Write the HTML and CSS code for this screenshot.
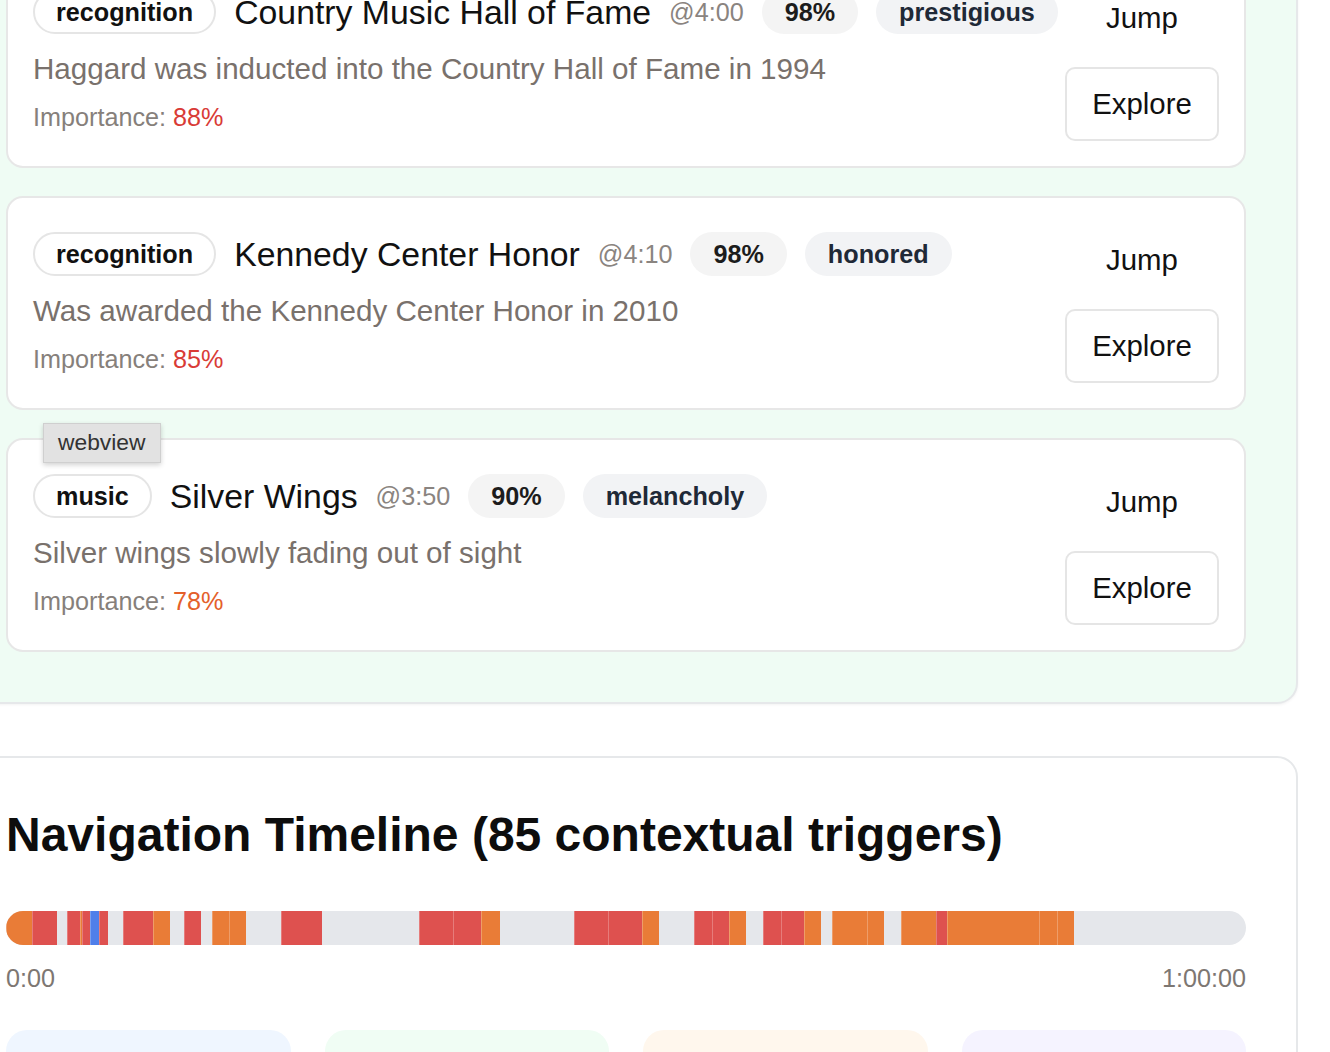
FILE: index.html
```html
<!DOCTYPE html>
<html lang="en">
<head>
<meta charset="utf-8">
<title>Contextual triggers</title>
<link rel="stylesheet" href="styles.css">
</head>
<body>
<div class="page">
  <section class="panel panel-green">
    <div class="card">
      <div class="card-main">
        <div class="row">
          <span class="pill pill-cat">recognition</span>
          <span class="title">Country Music Hall of Fame</span>
          <span class="ts">@4:00</span>
          <span class="pill pill-score">98%</span>
          <span class="pill pill-tone">prestigious</span>
        </div>
        <p class="desc">Haggard was inducted into the Country Hall of Fame in 1994</p>
        <p class="imp">Importance: <span class="imp-high">88%</span></p>
      </div>
      <div class="actions">
        <button class="btn btn-ghost">Jump</button>
        <button class="btn btn-outline">Explore</button>
      </div>
    </div>

    <div class="card">
      <div class="card-main">
        <div class="row">
          <span class="pill pill-cat">recognition</span>
          <span class="title">Kennedy Center Honor</span>
          <span class="ts">@4:10</span>
          <span class="pill pill-score">98%</span>
          <span class="pill pill-tone">honored</span>
        </div>
        <p class="desc">Was awarded the Kennedy Center Honor in 2010</p>
        <p class="imp">Importance: <span class="imp-high">85%</span></p>
      </div>
      <div class="actions">
        <button class="btn btn-ghost">Jump</button>
        <button class="btn btn-outline">Explore</button>
      </div>
    </div>

    <div class="card">
      <span class="tooltip">webview</span>
      <div class="card-main">
        <div class="row">
          <span class="pill pill-cat">music</span>
          <span class="title">Silver Wings</span>
          <span class="ts">@3:50</span>
          <span class="pill pill-score">90%</span>
          <span class="pill pill-tone">melancholy</span>
        </div>
        <p class="desc">Silver wings slowly fading out of sight</p>
        <p class="imp">Importance: <span class="imp-mid">78%</span></p>
      </div>
      <div class="actions">
        <button class="btn btn-ghost">Jump</button>
        <button class="btn btn-outline">Explore</button>
      </div>
    </div>
  </section>

  <section class="panel panel-white">
    <h2 class="heading">Navigation Timeline (85 contextual triggers)</h2>
    <div class="bar">
      <span class="seg seg-o" style="left:0%;width:2.097%"></span>
      <span class="seg seg-r" style="left:2.097%;width:2.016%"></span>
      <span class="seg seg-r" style="left:4.919%;width:1.048%"></span>
      <span class="seg seg-o" style="left:5.968%;width:0.161%"></span>
      <span class="seg seg-r" style="left:6.129%;width:0.645%"></span>
      <span class="seg seg-b" style="left:6.774%;width:0.726%"></span>
      <span class="seg seg-r" style="left:7.5%;width:0.726%"></span>
      <span class="seg seg-r" style="left:9.435%;width:2.419%"></span>
      <span class="seg seg-o" style="left:11.855%;width:1.371%"></span>
      <span class="seg seg-r" style="left:14.355%;width:1.371%"></span>
      <span class="seg seg-o" style="left:16.613%;width:1.371%"></span>
      <span class="seg seg-o" style="left:17.984%;width:1.371%"></span>
      <span class="seg seg-r" style="left:22.177%;width:3.306%"></span>
      <span class="seg seg-r" style="left:33.306%;width:2.742%"></span>
      <span class="seg seg-r" style="left:36.048%;width:2.258%"></span>
      <span class="seg seg-o" style="left:38.306%;width:1.532%"></span>
      <span class="seg seg-r" style="left:45.806%;width:2.742%"></span>
      <span class="seg seg-r" style="left:48.548%;width:2.742%"></span>
      <span class="seg seg-o" style="left:51.29%;width:1.371%"></span>
      <span class="seg seg-r" style="left:55.484%;width:1.452%"></span>
      <span class="seg seg-r" style="left:56.935%;width:1.371%"></span>
      <span class="seg seg-o" style="left:58.306%;width:1.371%"></span>
      <span class="seg seg-r" style="left:61.048%;width:1.452%"></span>
      <span class="seg seg-r" style="left:62.5%;width:1.855%"></span>
      <span class="seg seg-o" style="left:64.355%;width:1.371%"></span>
      <span class="seg seg-o" style="left:66.613%;width:2.823%"></span>
      <span class="seg seg-o" style="left:69.435%;width:1.371%"></span>
      <span class="seg seg-o" style="left:72.177%;width:2.823%"></span>
      <span class="seg seg-r" style="left:75%;width:0.887%"></span>
      <span class="seg seg-o" style="left:75.887%;width:7.419%"></span>
      <span class="seg seg-o" style="left:83.306%;width:1.452%"></span>
      <span class="seg seg-o" style="left:84.758%;width:1.371%"></span>
    </div>
    <div class="labels">
      <span>0:00</span>
      <span>1:00:00</span>
    </div>
    <div class="stats">
      <div class="stat stat-blue"></div>
      <div class="stat stat-green"></div>
      <div class="stat stat-orange"></div>
      <div class="stat stat-purple"></div>
    </div>
  </section>
</div>
</body>
</html>
```

FILE: styles.css
```css
* { box-sizing: border-box; }

html, body {
  margin: 0;
  padding: 0;
  background: #ffffff;
  overflow: hidden;
}

body {
  font-family: "Liberation Sans", Arial, Helvetica, sans-serif;
  color: #111111;
}

.page {
  margin-top: -98px;
  margin-left: -46px;
  width: 1344px;
}

.panel {
  border: 2px solid #e6e8ea;
  border-radius: 21px;
  padding: 50px;
}

.panel-green {
  background: #effcf4;
  display: flex;
  flex-direction: column;
  gap: 28px;
  box-shadow: 0 1px 3px rgba(0, 0, 0, 0.05);
}

.panel-white {
  background: #ffffff;
  margin-top: 52px;
}

.card {
  position: relative;
  background: #ffffff;
  border: 2px solid #e7e7e7;
  border-radius: 17px;
  padding: 25px;
  display: flex;
  align-items: flex-start;
  justify-content: space-between;
}

.card-main {
  display: flex;
  flex-direction: column;
  padding-top: 9px;
}

.row {
  display: flex;
  align-items: center;
  gap: 18px;
}

.pill {
  display: inline-flex;
  align-items: center;
  height: 44px;
  padding: 0 21px;
  border-radius: 999px;
  font-size: 25.2px;
  font-weight: 700;
  border: 2px solid transparent;
}

.pill-cat {
  background: #ffffff;
  border-color: #e5e5e5;
  color: #111111;
}

.pill-score {
  background: #f4f4f4;
  color: #1c1c1c;
}

.pill-tone {
  background: #f2f3f5;
  color: #1f2937;
}

.title {
  font-size: 33.8px;
  color: #111111;
}

.ts {
  font-size: 25.2px;
  color: #8a8480;
}

.desc {
  margin: 13px 0 0;
  font-size: 29.6px;
  line-height: 1.5;
  color: #79716c;
}

.imp {
  margin: 8px 0 0;
  font-size: 25.2px;
  line-height: 1.5;
  color: #86807b;
}

.imp-high { color: #d93b36; }
.imp-mid { color: #e4602a; }

.actions {
  display: flex;
  flex-direction: column;
  gap: 12px;
}

.btn {
  width: 154px;
  height: 74px;
  font-family: inherit;
  font-size: 29.4px;
  color: #111111;
  background: #ffffff;
  border-radius: 10px;
  border: 2px solid transparent;
  padding: 0;
}

.btn-outline {
  border-color: #e5e5e5;
}

.tooltip {
  position: absolute;
  top: -17px;
  left: 35px;
  padding: 5px 15px 6px 14px;
  font-size: 22.8px;
  line-height: 27px;
  color: #333333;
  background: #e2e2e2;
  border: 1px solid #cfcfcf;
  box-shadow: 0 2px 5px rgba(0, 0, 0, 0.18);
  z-index: 2;
}

.heading {
  margin: 0;
  font-size: 48px;
  font-weight: 700;
  color: #0d0d0d;
  line-height: 1.11;
}

.bar {
  position: relative;
  margin-top: 50px;
  height: 34px;
  border-radius: 17px;
  background: #e5e7eb;
  overflow: hidden;
}

.seg {
  position: absolute;
  top: 0;
  bottom: 0;
  box-shadow: inset 1px 0 0 rgba(255, 255, 255, 0.25);
}

.seg-o { background: #e97c37; }
.seg-r { background: #de514f; }
.seg-b { background: #4f7fea; }

.labels {
  display: flex;
  justify-content: space-between;
  margin-top: 15px;
  font-size: 25.2px;
  line-height: 1.5;
  color: #7d7772;
}

.stats {
  display: grid;
  grid-template-columns: repeat(4, 1fr);
  gap: 34px;
  margin-top: 32px;
}

.stat {
  height: 160px;
  border-radius: 21px;
}

.stat-blue { background: #eff6ff; }
.stat-green { background: #f0fdf4; }
.stat-orange { background: #fff7ed; }
.stat-purple { background: #f5f3ff; }
```
